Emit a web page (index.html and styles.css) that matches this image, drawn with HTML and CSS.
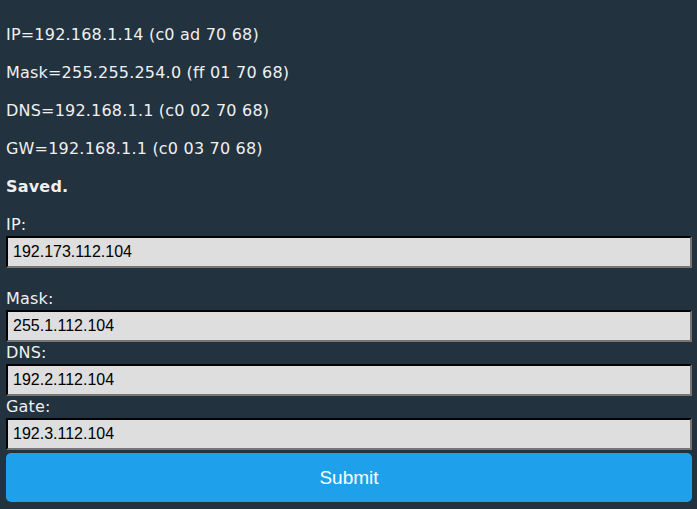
FILE: index.html
```html
<!DOCTYPE html>
<html lang="en">
<head>
    <meta charset="UTF-8">
    <meta name="viewport" content="width=device-width, initial-scale=1.0">
    <title>Network Settings</title>
    <link rel="stylesheet" href="styles.css">
</head>
<body>
    <div class="status">
        <p>IP=192.168.1.14 (c0 ad 70 68)</p>
        <p>Mask=255.255.254.0 (ff 01 70 68)</p>
        <p>DNS=192.168.1.1 (c0 02 70 68)</p>
        <p>GW=192.168.1.1 (c0 03 70 68)</p>
        <p class="saved">Saved.</p>
    </div>

    <form class="net-form" onsubmit="return false;">
        <label for="ip">IP:</label>
        <input type="text" id="ip" name="ip" value="192.173.112.104">
        <div class="spacer"></div>
        <label for="mask">Mask:</label>
        <input type="text" id="mask" name="mask" value="255.1.112.104">
        <label for="dns">DNS:</label>
        <input type="text" id="dns" name="dns" value="192.2.112.104">
        <label for="gw">Gate:</label>
        <input type="text" id="gw" name="gw" value="192.3.112.104">
        <button type="submit" class="submit-btn">Submit</button>
    </form>
</body>
</html>
```

FILE: styles.css
```css
body {
    font-family: "DejaVu Sans", Verdana, sans-serif;
    font-size: 16px;
    letter-spacing: 0.2px;
    margin: 0;
    padding: 8px 5px 0 6px;
    background-color: #22323f;
    color: #f0f0f0;
}
.status p {
    margin: 16px 0;
    line-height: 22px;
}
.saved {
    font-weight: bold;
}
.net-form label {
    display: block;
    line-height: 22px;
}
.net-form input {
    display: block;
    box-sizing: border-box;
    width: 100%;
    height: 32px;
    margin: 0;
    padding: 0 5px;
    font-family: "Liberation Sans", Arial, sans-serif;
    font-size: 16px;
    letter-spacing: 0;
    color: #000;
    background-color: #dedede;
    border: 2px inset #767676;
    border-top-color: #1a1a1a;
    border-left-color: #1a1a1a;
}
.spacer {
    height: 20px;
}
.submit-btn {
    display: block;
    width: 100%;
    height: 49px;
    margin-top: 3px;
    font-family: "Liberation Sans", Arial, sans-serif;
    font-size: 19px;
    color: #fff;
    background-color: #1ea1ea;
    border: none;
    border-radius: 5px;
    cursor: pointer;
}
```
